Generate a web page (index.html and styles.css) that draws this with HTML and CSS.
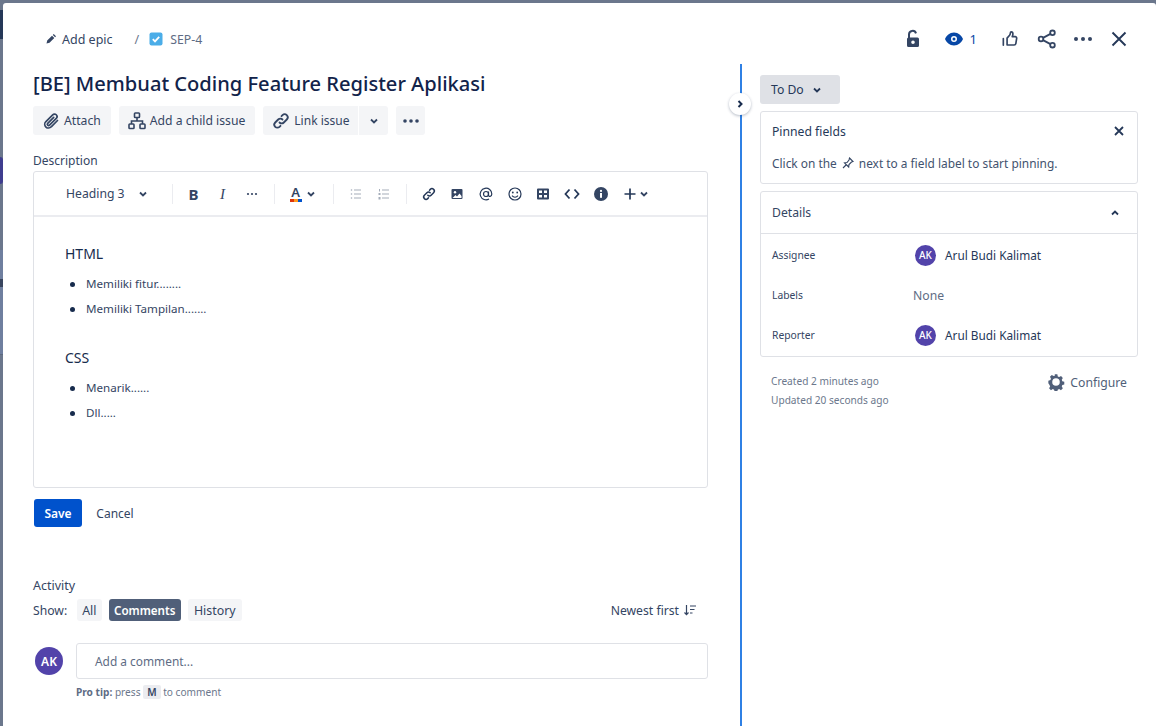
FILE: index.html
```html
<!DOCTYPE html>
<html>
<head>
	<title>SEP-4</title>
	<link rel="stylesheet" href="styles.css">
</head>
<body>
	<div class="backdrop">
		<div class="bgnav"></div>
		<div class="bgchip"></div>
		<div class="bgpeek"></div>
		<div class="bgglyph"></div>
		<div class="bgline"></div>
	</div>
	<div class="modal">
		<div class="topbar">
			<div class="crumbs">
				<svg class="ic14" viewBox="0 0 14 14"><path d="M2.500 11.500l.7-3 4.800-4.800 2.300 2.300-4.800 4.800z M8.800 2.900l.9-.9 2.300 2.300-.9.900z" fill="#344563"/></svg>
				<span class="epic">Add epic</span>
				<span class="slash">/</span>
				<svg class="ic14" viewBox="0 0 14 14"><rect x="0.500" y="0.500" width="13" height="13" rx="2" fill="#4bade8"/><path d="M3.800 7.200l2.200 2.200 4.200-4.600" fill="none" stroke="#fff" stroke-width="1.800"/></svg>
				<span class="key">SEP-4</span>
			</div>
			<div class="topicons">
				<svg class="ic24 lock" viewBox="0 0 24 24"><path d="M8 11V7.500a3.600 3.600 0 0 1 7-1.200" fill="none" stroke="#344563" stroke-width="2"/><path fill-rule="evenodd" d="M7.500 10.500h9a1.500 1.500 0 0 1 1.500 1.500v6.500a1.500 1.500 0 0 1-1.500 1.500h-9A1.500 1.500 0 0 1 6 18.500V12a1.500 1.500 0 0 1 1.500-1.500zM12 13.400a1.800 1.800 0 1 0 0 3.600 1.800 1.800 0 0 0 0-3.600z" fill="#344563"/></svg>
				<div class="watch">
					<svg class="ic24" viewBox="0 0 24 24"><path fill-rule="evenodd" d="M12 5.500c4.500 0 7.500 3.200 9 6.500-1.500 3.300-4.500 6.500-9 6.500S4.500 15.300 3 12c1.500-3.300 4.500-6.500 9-6.500zM12 9a3 3 0 1 0 0 6 3 3 0 0 0 0-6z" fill="#0747a6"/><circle cx="12" cy="12" r="1.500" fill="#0747a6"/></svg>
					<span>1</span>
				</div>
				<svg class="like" viewBox="0 0 24 24"><path d="M8.500 11l3-3.500c.6-.8 1-1.800 1-3 0-.6.500-1 1-1 1.300 0 2 1.200 2 2.500 0 1.200-.4 2.200-.8 3.200h3.600c1.100 0 1.900 1 1.700 2l-1 6.300c-.2 1-1 1.700-2 1.700H8.500zM4 11.500v8" fill="none" stroke="#344563" stroke-width="2" stroke-linejoin="round" stroke-linecap="round"/></svg>
				<svg class="ic24 share" viewBox="0 0 24 24"><g fill="none" stroke="#344563" stroke-width="1.800"><circle cx="6" cy="12" r="2.300"/><circle cx="17.500" cy="5.800" r="2.300"/><circle cx="17.500" cy="18.200" r="2.300"/><path d="M8 10.900l7.500-4M8 13.100l7.500 4"/></g></svg>
				<svg class="ic24 more" viewBox="0 0 24 24"><circle cx="5" cy="12" r="2" fill="#344563"/><circle cx="12" cy="12" r="2" fill="#344563"/><circle cx="19" cy="12" r="2" fill="#344563"/></svg>
				<svg class="ic24 close" viewBox="0 0 24 24"><path d="M5.500 5.500l13 13M18.500 5.500l-13 13" fill="none" stroke="#253858" stroke-width="1.900"/></svg>
			</div>
		</div>
		<div class="columns">
			<div class="main">
				<h1>[BE] Membuat Coding Feature Register Aplikasi</h1>
				<div class="actions">
					<button class="btn"><svg class="ic20" viewBox="0 0 20 20"><path d="M16.500 9.500l-6.300 6.300a3.700 3.700 0 0 1-5.500-5l7-7a2.500 2.500 0 0 1 3.600 3.500l-6.800 6.900a1.200 1.200 0 0 1-1.800-1.800l6-6" fill="none" stroke="#344563" stroke-width="1.700" stroke-linecap="round"/></svg>Attach</button>
					<button class="btn"><svg class="ic20" viewBox="0 0 20 20"><g fill="none" stroke="#344563" stroke-width="1.600"><rect x="7.500" y="2" width="5" height="4.500" rx=".8"/><rect x="2" y="13" width="5" height="4.500" rx=".8"/><rect x="13" y="13" width="5" height="4.500" rx=".8"/><path d="M10 6.500v3.500M4.500 13v-3h11v3"/></g></svg>Add a child issue</button>
					<div class="split">
						<button class="btn left"><svg class="ic20" viewBox="0 0 20 20"><g fill="none" stroke="#344563" stroke-width="1.800" stroke-linecap="round"><path d="M8.500 11.500a3 3 0 0 0 4.300 0l3-3a3 3 0 0 0-4.300-4.300l-1 1"/><path d="M11.500 8.500a3 3 0 0 0-4.300 0l-3 3a3 3 0 0 0 4.300 4.300l1-1"/></g></svg>Link issue</button>
						<button class="btn right"><svg class="ic12" viewBox="0 0 12 12"><path d="M3 4.500l3 3 3-3" fill="none" stroke="#344563" stroke-width="1.800"/></svg></button>
					</div>
					<button class="btn dots"><svg class="ic20" viewBox="0 0 20 20"><circle cx="4" cy="10" r="1.800" fill="#344563"/><circle cx="10" cy="10" r="1.800" fill="#344563"/><circle cx="16" cy="10" r="1.800" fill="#344563"/></svg></button>
				</div>
				<div class="desclabel">Description</div>
				<div class="editor">
					<div class="toolbar">
						<span class="heading">Heading 3</span>
						<svg class="ic12 headchev" viewBox="0 0 12 12"><path d="M3 4.500l3 3 3-3" fill="none" stroke="#344563" stroke-width="1.800"/></svg>
						<span class="sep first"></span>
						<span class="tb bold">B</span>
						<span class="tb ital">I</span>
						<svg class="tbicon ellipsis" viewBox="0 0 16 16"><circle cx="4" cy="8" r="1.100" fill="#344563"/><circle cx="8" cy="8" r="1.100" fill="#344563"/><circle cx="12" cy="8" r="1.100" fill="#344563"/></svg>
						<span class="sep"></span>
						<span class="colour">A<i></i></span>
						<svg class="ic12 colchev" viewBox="0 0 12 12"><path d="M3 4.500l3 3 3-3" fill="none" stroke="#344563" stroke-width="1.800"/></svg>
						<span class="sep"></span>
						<svg class="tbicon" viewBox="0 0 16 16"><g fill="#a5adba"><rect x="6" y="3.500" width="7" height="1"/><rect x="6" y="7.500" width="7" height="1"/><rect x="6" y="11.500" width="7" height="1"/><circle cx="3.500" cy="4" r=".8"/><circle cx="3.500" cy="8" r=".8"/><circle cx="3.500" cy="12" r=".8"/></g></svg>
						<svg class="tbicon" viewBox="0 0 16 16"><g fill="#a5adba"><rect x="6" y="3.500" width="7" height="1"/><rect x="6" y="7.500" width="7" height="1"/><rect x="6" y="11.500" width="7" height="1"/><rect x="3" y="3" width="1" height="2.500"/><rect x="2.500" y="7" width="2" height="2"/><rect x="2.500" y="11" width="2" height="2.500"/></g></svg>
						<span class="sep"></span>
						<svg class="tbicon16" viewBox="0 0 16 16"><g fill="none" stroke="#253858" stroke-width="1.500" stroke-linecap="round"><path d="M6.800 9.200a2.300 2.300 0 0 0 3.300 0l2.500-2.500a2.300 2.300 0 0 0-3.300-3.300l-.8.800"/><path d="M9.200 6.800a2.300 2.300 0 0 0-3.300 0l-2.500 2.500a2.300 2.300 0 0 0 3.300 3.300l.8-.8"/></g></svg>
						<svg class="tbicon16" viewBox="0 0 16 16"><rect x="2.500" y="3" width="11" height="10" rx="1" fill="#344563"/><circle cx="6" cy="6.200" r="1.200" fill="#fff"/><path d="M3.500 12l3-3 1.500 1.500 2.500-3 2 2.500V12z" fill="#fff"/></svg>
						<svg class="tbicon16" viewBox="0 0 16 16"><g fill="none" stroke="#253858" stroke-width="1.200"><circle cx="8" cy="8" r="2.500"/><path d="M10.500 5.500v3.700c0 1.800 3.300 1.800 3.300-1.200A5.800 5.800 0 1 0 11 13"/></g></svg>
						<svg class="tbicon16" viewBox="0 0 16 16"><circle cx="8" cy="8" r="6" fill="none" stroke="#253858" stroke-width="1.200"/><circle cx="5.800" cy="6.500" r=".9" fill="#253858"/><circle cx="10.200" cy="6.500" r=".9" fill="#253858"/><path d="M5 9.700c1.500 2 4.500 2 6 0" fill="none" stroke="#253858" stroke-width="1.100"/></svg>
						<svg class="tbicon16" viewBox="0 0 16 16"><path fill-rule="evenodd" d="M3 2.500h10a1 1 0 0 1 1 1v9a1 1 0 0 1-1 1H3a1 1 0 0 1-1-1v-9a1 1 0 0 1 1-1zM4 4.500v2.500h3V4.500zM9 4.500v2.500h3V4.500zM4 9v2.500h3V9zM9 9v2.500h3V9z" fill="#344563"/></svg>
						<svg class="tbicon16" viewBox="0 0 16 16"><path d="M5.500 3.500L1.500 8l4 4.500M10.500 3.500l4 4.500-4 4.500" fill="none" stroke="#253858" stroke-width="1.800"/></svg>
						<svg class="tbicon16" viewBox="0 0 16 16"><circle cx="8" cy="8" r="7" fill="#344563"/><rect x="7" y="7" width="2" height="4.800" fill="#fff"/><circle cx="8" cy="4.900" r="1.100" fill="#fff"/></svg>
						<svg class="tbicon16 plus" viewBox="0 0 16 16"><path d="M8 2.500v11M2.500 8h11" stroke="#253858" stroke-width="1.700"/></svg>
						<svg class="ic12 pluschev" viewBox="0 0 12 12"><path d="M3 4.500l3 3 3-3" fill="none" stroke="#344563" stroke-width="1.800"/></svg>
					</div>
					<div class="content">
						<h3>HTML</h3>
						<ul>
							<li>Memiliki fitur........</li>
							<li>Memiliki Tampilan.......</li>
						</ul>
						<h3 class="second">CSS</h3>
						<ul>
							<li>Menarik......</li>
							<li>Dll.....</li>
						</ul>
					</div>
				</div>
				<div class="savebar">
					<button class="save">Save</button>
					<button class="cancel">Cancel</button>
				</div>
				<div class="activity">Activity</div>
				<div class="showrow">
					<span class="showlabel">Show:</span>
					<button class="tab">All</button>
					<button class="tab on">Comments</button>
					<button class="tab wide">History</button>
					<span class="newest">Newest first
						<svg class="ic14" viewBox="0 0 14 14"><path d="M3.500 2v9.500M1.500 9.500l2 2.200 2-2.200" fill="none" stroke="#344563" stroke-width="1.200"/><path d="M7 3h6M7 6.500h4.500M7 10h2.500" stroke="#344563" stroke-width="1.200"/></svg>
					</span>
				</div>
				<div class="commentrow">
					<div class="avatar big">AK</div>
					<div class="commentbox">Add a comment...</div>
				</div>
				<div class="protip"><b>Pro tip:</b> press <span class="kbd">M</span> to comment</div>
			</div>
			<div class="divider">
				<div class="collapse"><svg class="ic12" viewBox="0 0 12 12"><path d="M4.500 3l3 3-3 3" fill="none" stroke="#172b4d" stroke-width="2"/></svg></div>
			</div>
			<div class="side">
				<button class="status">To Do <svg class="ic12" viewBox="0 0 12 12"><path d="M3 4.500l3 3 3-3" fill="none" stroke="#253858" stroke-width="1.800"/></svg></button>
				<div class="panel pinned">
					<div class="pinhead">
						<span>Pinned fields</span>
						<svg class="ic12" viewBox="0 0 12 12"><path d="M2 2l8 8M10 2l-8 8" stroke="#253858" stroke-width="1.800"/></svg>
					</div>
					<div class="pintext">Click on the
						<svg class="ic14" viewBox="0 0 14 14"><path d="M8.500 2l3.500 3.500-1.500.5-2.500 2.500-.3 2.500L3.500 6.800 6 6.500 8 4z M5 9l-3 3" fill="none" stroke="#344563" stroke-width="1.100"/></svg>
						next to a field label to start pinning.</div>
				</div>
				<div class="panel details">
					<div class="dethead">
						<span>Details</span>
						<svg class="ic12" viewBox="0 0 12 12"><path d="M3 7.500l3-3 3 3" fill="none" stroke="#253858" stroke-width="1.800"/></svg>
					</div>
					<div class="field">
						<span class="flabel">Assignee</span>
						<span class="fvalue"><span class="avatar">AK</span>Arul Budi Kalimat</span>
					</div>
					<div class="field">
						<span class="flabel">Labels</span>
						<span class="fvalue none">None</span>
					</div>
					<div class="field">
						<span class="flabel">Reporter</span>
						<span class="fvalue"><span class="avatar">AK</span>Arul Budi Kalimat</span>
					</div>
				</div>
				<div class="meta">
					<div class="dates">
						<div>Created 2 minutes ago</div>
						<div>Updated 20 seconds ago</div>
					</div>
					<div class="configure">
						<svg class="gear" viewBox="0 0 20 20"><path fill-rule="evenodd" d="M8.500 1.500h3l.5 2.300 1.500.7 2.100-1.200 2 2.300-1.200 2 .6 1.600 2.200.6v3l-2.200.6-.6 1.500 1.200 2.100-2.100 2.100-2-1.200-1.600.6-.4 2.200h-3l-.6-2.200-1.500-.6-2 1.200-2.100-2.100 1.200-2.100-.7-1.500L1.500 11.500v-3l2.300-.6.600-1.500-1.100-2.100 2-2.100 2.100 1.100 1.500-.6zM10 5.800a4.200 4.200 0 1 0 0 8.400 4.200 4.200 0 0 0 0-8.400z" fill="#505f79"/></svg>
						Configure
					</div>
				</div>
			</div>
		</div>
	</div>
</body>
</html>
```

FILE: styles.css
```css
html, body { margin: 0; height: 726px; overflow: hidden; }
body { font-family: "Noto Sans", "Open Sans", sans-serif; font-size: 12px; color: #172b4d; background: #6b778c; position: relative; }

button { font-family: inherit; border: 0; cursor: pointer; }
svg { display: block; flex: none; }

.ic12 { width: 12px; height: 12px; }
.ic14 { width: 14px; height: 14px; }
.ic20 { width: 20px; height: 20px; }
.ic24 { width: 24px; height: 24px; }

/* page behind the dialog */
.backdrop { position: absolute; left: 0; top: 0; width: 3px; height: 726px; }
.bgnav { position: absolute; top: 10px; height: 29px; width: 3px; background: #253858; }
.bgchip { position: absolute; top: 157px; height: 27px; width: 3px; background: #3f3d8f; border-radius: 0 14px 14px 0; }
.bgpeek { position: absolute; top: 250px; height: 104px; width: 3px; background: #6f7f9f; }
.bgglyph { position: absolute; top: 279px; height: 8px; width: 3px; background: #39455f; }
.bgline { position: absolute; top: 354px; height: 1px; width: 3px; background: #5d6a80; }

.modal { position: absolute; left: 3px; top: 3px; right: 0; bottom: 0; background: #fff; border-radius: 3px 3px 0 0; display: flex; flex-direction: column; }

.topbar { display: flex; justify-content: space-between; align-items: center; height: 72px; flex: none; }
.crumbs { display: flex; align-items: center; margin-left: 41px; color: #42526e; font-size: 12.5px; }
.epic { margin-left: 4px; color: #344563; }
.slash { margin: 0 10px 0 22px; color: #6b778c; }
.key { margin-left: 7px; color: #5e6c84; font-size: 12.3px; }

.topicons { display: flex; align-items: center; margin-right: 25px; }
.watch { display: flex; align-items: center; gap: 4px; margin-left: 17px; color: #0747a6; font-size: 13px; }
.like { width: 20px; height: 20px; margin-left: 23px; }
.share { margin-left: 15px; }
.more { margin-left: 12px; }
.close { margin-left: 12px; }

.columns { display: flex; flex: 1; min-height: 0; }
.main { width: 675px; margin-left: 30px; flex: none; margin-top: -5px; }

h1 { margin: 0; font-size: 20.100px; font-weight: 500; line-height: 28px; color: #12234a; }

.actions { display: flex; gap: 8px; margin-top: 8px; }
.btn { display: flex; align-items: center; gap: 3px; height: 29px; padding: 0 10px 0 8px; background: #f4f5f7; border-radius: 3px; color: #344563; font-size: 12.200px; }
.split { display: flex; gap: 1px; }
.left { border-radius: 3px 0 0 3px; padding-right: 9px; font-size: 12px; }
.right { border-radius: 0 3px 3px 0; width: 29px; justify-content: center; padding: 0; }
.dots { padding: 0 4.500px; }

.desclabel { margin-top: 17px; font-size: 12px; line-height: 17px; color: #344563; }

.editor { margin-top: 2px; width: 673px; height: 315px; border: 1px solid #dfe1e6; border-radius: 3px; }
.toolbar { display: flex; align-items: center; height: 43px; border-bottom: 2px solid #ebecf0; color: #344563; }
.heading { margin-left: 32px; font-size: 12.200px; color: #344563; }
.headchev { margin-left: 12px; }
.sep { width: 1px; height: 20px; background: #ebecf0; margin: 0 14px 0 2px; }
.sep.first { margin-left: 23px; margin-right: 13px; }
.tb { width: 16px; text-align: center; color: #344563; margin-right: 13px; }
.bold { font-weight: 700; font-size: 15px; line-height: 18px; }
.ital { font-style: italic; font-size: 15px; line-height: 18px; font-family: "Liberation Serif", serif; }
.tbicon { width: 16px; height: 16px; margin-right: 12px; }
.ellipsis { margin-right: 12px; }
.colour { position: relative; width: 14px; margin-left: 0; text-align: center; font-weight: 600; font-size: 13px; line-height: 15px; height: 17px; color: #344563; }
.colour i { position: absolute; left: 1px; right: 1px; bottom: 0; height: 3px; background: linear-gradient(90deg, #de350b 33%, #ff991f 33% 66%, #0052cc 66%); }
.colchev { margin-left: 2px; }
.colchev + .sep { margin-left: 16px; }
.tbicon16 { width: 16px; height: 16px; margin-right: 12.700px; }
.plus { margin-left: 1px; margin-right: 0; }
.pluschev { margin-left: 0; }

.content { padding: 27px 31px 0; font-size: 11.600px; }
h3 { margin: 0; font-size: 14px; font-weight: 400; line-height: 20px; color: #172b4d; }
h3.second { margin-top: 30px; }
ul { margin: 11px 0 0; padding: 0 0 0 5px; color: #344563; list-style: none; }
li { display: flex; align-items: center; gap: 11px; line-height: 18px; margin-bottom: 7px; }
li::before { content: ""; width: 5px; height: 5px; border-radius: 50%; background: #172b4d; flex: none; }

.savebar { display: flex; gap: 2px; margin-top: 11px; margin-left: 1px; }
.save { width: 48px; height: 28px; background: #0052cc; color: #fff; font-weight: 600; font-size: 12px; border-radius: 3px; }
.cancel { width: 62px; height: 28px; background: none; color: #344563; font-size: 12px; }

.activity { margin-top: 50px; font-size: 12.500px; line-height: 18px; color: #344563; }
.showrow { display: flex; align-items: center; gap: 7px; margin-top: 4px; height: 22px; width: 675px; font-size: 12.200px; color: #344563; }
.showlabel { margin-right: 3px; }
.tab { height: 22px; padding: 0 5px; background: #f4f5f7; border-radius: 3px; color: #344563; font-size: 12.400px; }
.tab.on { background: #505f79; color: #fff; font-weight: 600; font-size: 11.600px; padding: 0 5.500px; }
.tab.wide { padding: 0 6px; }
.newest { margin-left: auto; display: flex; align-items: center; gap: 4px; margin-right: 11px; }

.commentrow { display: flex; align-items: center; margin-top: 22px; }
.avatar { display: inline-flex; align-items: center; justify-content: center; width: 21px; height: 21px; border-radius: 50%; background: #5243aa; color: #fff; font-size: 10px; font-weight: 500; }
.avatar.big { width: 28px; height: 28px; margin-left: 2px; font-size: 12px; font-weight: 600; flex: none; }
.commentbox { margin-left: 13px; width: 613px; height: 34px; line-height: 34px; padding-left: 18px; border: 1px solid #dfe1e6; border-radius: 3px; color: #5e6c84; font-size: 11.900px; }
.protip { margin: 6px 0 0 43px; font-size: 10.150px; color: #6b778c; }
.protip b { font-weight: 700; color: #5e6c84; }
.kbd { display: inline-block; padding: 0 4px; background: #ebecf0; border-radius: 2px; color: #344563; font-weight: 600; }

.divider { position: relative; width: 2px; background: #2f80e4; margin-left: 32px; margin-top: -11px; flex: none; }
.collapse { position: absolute; left: -11px; top: 29px; width: 22px; height: 22px; border-radius: 50%; background: #fff; box-shadow: 0 1px 3px rgba(9,30,66,.3); display: flex; align-items: center; justify-content: center; }

.side { margin-left: 18px; width: 378px; flex: none; }
.status { display: flex; align-items: center; gap: 7px; width: 80px; height: 29px; padding: 0 11px; background: #dfe1e6; border-radius: 3px; font-size: 12.200px; color: #253858; }
.panel { border: 1px solid #dfe1e6; border-radius: 3px; box-sizing: border-box; width: 378px; }
.pinned { height: 73px; margin-top: 7px; padding: 0 11px; }
.pinhead { display: flex; justify-content: space-between; align-items: center; height: 38px; color: #253858; font-size: 12.200px; }
.pinhead svg { margin-right: 1px; }
.pintext { display: flex; align-items: center; gap: 4px; margin-top: 5px; color: #42526e; font-size: 11.900px; }
.details { margin-top: 7px; height: 166px; }
.dethead { display: flex; justify-content: space-between; align-items: center; height: 41px; padding: 0 16px 0 11px; border-bottom: 1px solid #dfe1e6; font-size: 12.200px; color: #344563; }
.field { display: flex; align-items: center; height: 40px; }
.field:nth-child(2) { margin-top: 1px; }
.flabel { width: 141px; padding-left: 11px; flex: none; font-size: 10.300px; color: #344563; }
.fvalue { display: flex; align-items: center; gap: 9px; margin-left: 2px; font-size: 11.800px; color: #253858; }
.fvalue.none { margin-left: 0; color: #5e6c84; font-size: 12.200px; }

.meta { display: flex; justify-content: space-between; margin-top: 15px; padding: 0 11px; }
.dates { font-size: 10.150px; line-height: 19px; color: #6b778c; }
.configure { display: flex; align-items: center; gap: 5px; height: 24px; margin-top: -2px; font-size: 12.200px; color: #505f79; }
.gear { width: 18px; height: 18px; }
```
